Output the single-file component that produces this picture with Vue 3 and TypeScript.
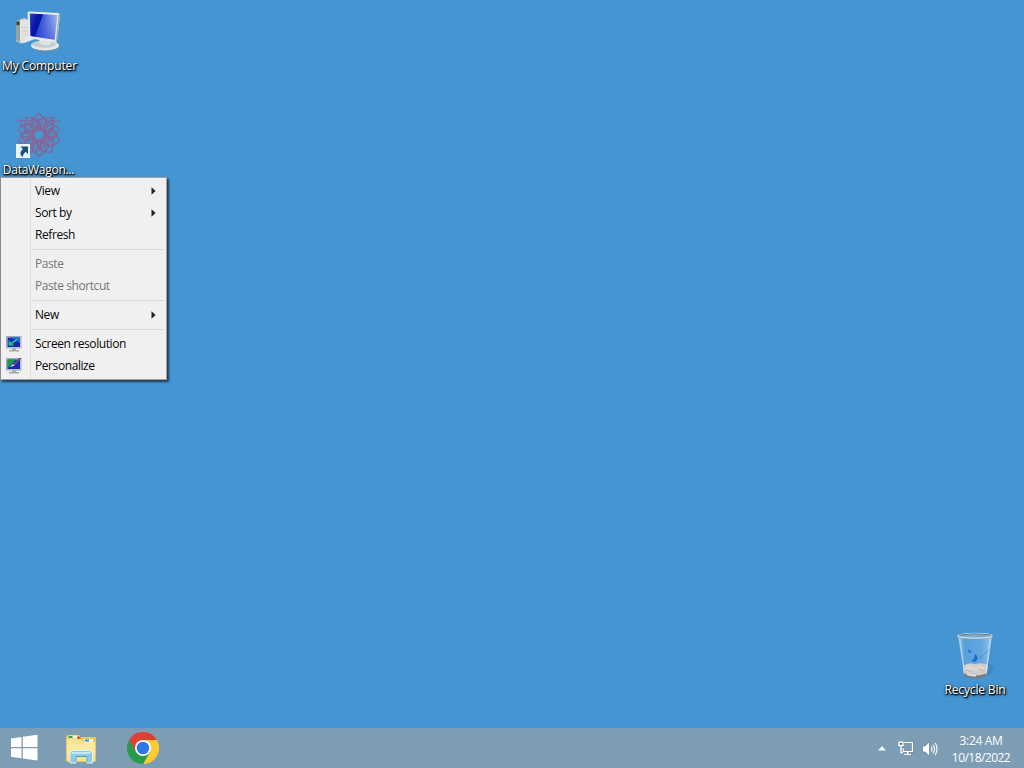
<script setup lang="ts">
interface MenuItem {
  label?: string
  submenu?: boolean
  disabled?: boolean
  icon?: 'resolution' | 'personalize'
}

const menu: MenuItem[] = [
  { label: 'View', submenu: true },
  { label: 'Sort by', submenu: true },
  { label: 'Refresh' },
  {},
  { label: 'Paste', disabled: true },
  { label: 'Paste shortcut', disabled: true },
  {},
  { label: 'New', submenu: true },
  {},
  { label: 'Screen resolution', icon: 'resolution' },
  { label: 'Personalize', icon: 'personalize' },
]

const petals: number[] = Array.from({ length: 10 }, (_, i) => i * 36)
</script>

<template>
  <div class="desktop">
    <div class="shortcut computer">
      <svg width="48" height="48" viewBox="0 0 48 48">
        <defs>
          <linearGradient id="scr" x1="0" y1="0" x2="1" y2="0.35">
            <stop offset="0" stop-color="#2b49d0" />
            <stop offset=".3" stop-color="#0a14a0" />
            <stop offset=".42" stop-color="#0a14a0" />
            <stop offset=".46" stop-color="#3c62dc" />
            <stop offset="1" stop-color="#b4d0fa" />
          </linearGradient>
          <linearGradient id="scrdark" x1="0" y1="0" x2="0" y2="1">
            <stop offset="0" stop-color="#0814a0" stop-opacity="0" />
            <stop offset="1" stop-color="#0618d0" stop-opacity=".55" />
          </linearGradient>
        </defs>
        <path d="M1 13 L9 10 L15 12 L15 31 L5 35 L1 33Z" fill="#c9cdd0" />
        <path d="M5 12 L15 12 L15 31 L5 35Z" fill="#e2e4e3" />
        <path d="M1 13 L5 12 V34 L1 32Z" fill="#999f9c" />
        <rect x="1.400" y="13.500" width="3" height="3.600" fill="#274e22" />
        <path d="M6.500 19.500H13M6.500 23H13M7 27H13" stroke="#ccd0d1" />
        <path d="M5 35.500 L17 29 L20 31 L9 35Z" fill="#e9eceb" />
        <ellipse cx="31" cy="39" rx="15" ry="5.300" fill="#6f8ea5" opacity=".6" />
        <ellipse cx="30" cy="37.500" rx="14" ry="5" fill="#e4e8e8" />
        <ellipse cx="29" cy="36.300" rx="12" ry="3.500" fill="#c5cccf" />
        <path d="M25 29 L36 30 L36 36 Q30 39 24 35Z" fill="#dce1e2" />
        <path d="M12.500 5 Q12.600 3.500 14.200 3.600 L43.500 5 Q45.300 5.100 45.100 7 L42 33 Q41.700 35 40 34.600 L15.600 30.500 Q14 30.200 14 28.400Z" fill="#e6e9e7" />
        <path d="M43.500 5.200 Q45.300 5.300 45.100 7 L42 33 L40.600 34.400Z" fill="#a8aeae" />
        <path d="M14.800 5.600 L42.300 7 L39.600 31.800 L15.500 28Z" fill="url(#scr)" />
        <path d="M14.800 5.600 L42.300 7 L39.600 31.800 L15.500 28Z" fill="url(#scrdark)" />
      </svg>
      <span class="caption cap-computer">My Computer</span>
    </div>

    <div class="shortcut wagon">
      <svg width="48" height="48" viewBox="0 0 48 48">
        <g fill="none" stroke="#b04a78" stroke-width="1.100" opacity=".72">
          <g v-for="a in petals" :key="a" :transform="`rotate(${a} 24 24)`">
            <path d="M21 18 L17 9 L24 2.500 L31 9 L27 18" />
            <path d="M24 19 L14 13 L18 7 L25 11 L21 17 L28 20" />
          </g>
          <circle cx="24" cy="23.500" r="7" />
          <path d="M1.500 10H20M30 10H46M6 7V17M38 5V20" />
        </g>
        <circle cx="24" cy="23.500" r="2.800" fill="#4e93cd" />
        <rect x="1" y="33" width="14" height="14" fill="#e9f2f8" />
        <path d="M5.500 35.500 H13 V43 L10.600 40.800 Q8.300 42.200 7.800 46 Q2.800 42.500 7.900 38Z" fill="#164f80" />
      </svg>
      <span class="caption cap-wagon">DataWagon...</span>
    </div>

    <div class="shortcut recycle">
      <svg width="48" height="48" viewBox="0 0 48 48">
        <defs>
          <linearGradient id="glass" x1="0" y1="0" x2="1" y2="0">
            <stop offset="0" stop-color="#b3d0e7" stop-opacity=".8" />
            <stop offset=".2" stop-color="#5ea4de" stop-opacity=".75" />
            <stop offset=".7" stop-color="#6aacE4" stop-opacity=".8" />
            <stop offset="1" stop-color="#a5d0ee" stop-opacity=".85" />
          </linearGradient>
        </defs>
        <path d="M37 30 L43 36 L40 42 L33 45Z" fill="#1f5a90" opacity=".22" />
        <path d="M7 4 L41 4 L35.500 43.500 Q24 49 13 43.500Z" fill="url(#glass)" />
        <path d="M12 34 Q17 30 24 32 Q31 30 37 33 L35.500 43 Q24 48 13 43Z" fill="#cfcccb" />
        <path d="M14 36 L19 33 L23 36 L29 33 L34 36 L30 39 L22 38 L16 40Z" fill="#ded8d3" />
        <path d="M15 38 L21 40 M27 37 L33 39" stroke="#bcb2aa" />
        <path d="M13 41.500 Q24 45.500 35.700 41.500 L35 44.500 Q24 48.500 13.500 44.500Z" fill="#757c80" />
        <path d="M16 42.500 Q21 44 25 43.800" stroke="#e5e5e3" stroke-width="1.500" fill="none" />
        <path d="M24 22 Q27 24 26.500 27 L24 30 L20 29 L23 27Z M17 17 L21 20 L18 21Z" fill="#1e68d0" />
        <path d="M28 27 L39 17" stroke="#347fb9" opacity=".5" />
        <path d="M8.800 7 L13.500 40" stroke="#cfe0ec" stroke-width="1.200" opacity=".7" />
        <path d="M39.200 7 L35.200 40" stroke="#d5e9f7" stroke-width="1.200" opacity=".7" />
        <ellipse cx="24" cy="3.800" rx="17" ry="2.300" fill="#76a9cf" stroke="#d1d9dc" stroke-width="1.300" />
        <path d="M8 3 Q24 .5 40 3" fill="none" stroke="#637984" />
      </svg>
      <span class="caption cap-recycle">Recycle Bin</span>
    </div>

    <ul class="menu">
      <li
        v-for="(item, i) in menu"
        :key="i"
        :class="item.label ? ['item', { disabled: item.disabled }] : 'separator'"
      >
        <template v-if="item.label">
          <span class="gutter">
            <svg v-if="item.icon" width="16" height="16" viewBox="0 0 16 16">
              <rect x=".5" y=".5" width="14.500" height="11.500" fill="#d9dde4" stroke="#a2a8b2" />
              <rect x="1.500" y="1.500" width="12.500" height="9.500" fill="#1429b5" />
              <path d="M6 12.500H10V14H13V15.500H3V14H6Z" fill="#a3aaa9" />
              <template v-if="item.icon === 'resolution'">
                <path d="M5 1.500H14V7Z" fill="#1565db" />
                <path d="M2.500 4V9.500H8L6.500 7.700L12 3.500L11 2.500L5 6.400Z" fill="#28c080" />
              </template>
              <template v-else>
                <path d="M1.500 1.500H10L5 7L1.500 10.500Z" fill="#1a9a50" />
                <path d="M4 9L7.500 5.500L9 7.500Z" fill="#f3eef4" />
                <path d="M7.500 7L14.500 0" stroke="#78477d" stroke-width="2" />
              </template>
            </svg>
          </span>
          <span class="label">{{ item.label }}</span>
          <svg v-if="item.submenu" class="arrow" width="5" height="8" viewBox="0 0 5 8">
            <path d="M.5 .2L4.600 4L.5 7.800Z" fill="#222" />
          </svg>
        </template>
      </li>
    </ul>

    <footer class="taskbar">
      <div class="apps">
        <svg class="start" width="28" height="28" viewBox="0 0 28 28">
          <path d="M1 4.500L11.500 3V13H1ZM12.800 2.800L27.500 .8V13H12.800ZM1 14.300H11.500V24.300L1 22.800ZM12.800 14.300H27.500V26.500L12.800 24.500Z" fill="#fff" />
        </svg>
        <svg class="explorer" width="32" height="30" viewBox="0 0 32 30">
          <path d="M1 3Q1 1 3 1H14Q15 1 15 3H30Q31 3 31 4V26Q31 28 29 28H3Q1 28 1 26Z" fill="#e8c765" />
          <rect x="4" y="1.500" width="9" height="3" fill="#f7f2d0" />
          <rect x="4" y="2" width="3.500" height="2" fill="#2ba152" />
          <rect x="12" y="2.500" width="3.500" height="3" fill="#d86332" />
          <path d="M2 5H16L19 8H30V27H2Z" fill="#f8e391" />
          <path d="M18 5H28V8H20Z" fill="#f5f7ee" />
          <rect x="20" y="5.500" width="4" height="2" fill="#398fc9" />
          <path d="M2 10H17L20 8H30V20H2Z" fill="#fbeaa1" />
          <path d="M5 29V20Q5 16.500 8.500 16.500H24Q27.500 16.500 27.500 20V29H22V22.500H11V29Z" fill="#8bcbe8" stroke="#dff3fa" />
          <path d="M7 19H25" stroke="#c4e9f6" stroke-width="2" />
          <path d="M11 28V22.500H22V28" fill="none" stroke="#4a9ec1" />
        </svg>
        <svg class="chrome" width="32" height="32" viewBox="0 0 32 32">
          <path d="M2.140 8A16 16 0 0 1 29.860 8H16L9.070 20Z" fill="#de4032" />
          <path d="M29.860 8A16 16 0 0 1 16 32L22.930 20L16 8Z" fill="#fdca32" />
          <path d="M16 32A16 16 0 0 1 2.140 8L9.070 20H22.930Z" fill="#289b4a" />
          <circle cx="16" cy="16" r="8" fill="#fff" />
          <circle cx="16" cy="16" r="6.300" fill="#2f78e8" />
        </svg>
      </div>
      <div class="tray">
        <svg class="up" width="8" height="5" viewBox="0 0 8 5">
          <path d="M4 0L8 4.500H0Z" fill="#f7fbfd" />
        </svg>
        <svg class="net" width="16" height="15" viewBox="0 0 16 15">
          <path d="M5 1.500H15V10.500H4.500V6M9.500 10.500V13.500M6 13.500H13" fill="none" stroke="#3d5364" stroke-width="3" opacity=".55" />
          <path d="M6 1.500H14.500V10.500H5V7M9.700 10.500V13.500M6 13.500H13" fill="none" stroke="#fff" stroke-width="1.500" />
          <path d="M1 1.200H5V4.500H1ZM3 4.500V11.500H5" fill="#586f80" stroke="#fff" stroke-width="1.400" />
        </svg>
        <svg class="sound" width="16" height="16" viewBox="0 0 16 16">
          <path d="M.5 5H3L7.500 .8V15.200L3 11H.5Z" fill="#fff" stroke="#576d7c" stroke-width=".6" />
          <path d="M9.300 5.500Q10.700 8 9.300 10.500M11.300 3.700Q13.700 8 11.300 12.300M13.200 1.800Q16.700 8 13.200 14.200" fill="none" stroke="#f3f8fb" stroke-width="1.200" />
        </svg>
        <div class="clock">
          <span class="time">3:24 AM</span>
          <span class="date">10/18/2022</span>
        </div>
      </div>
    </footer>
  </div>
</template>

<style>
body {
  margin: 0;
  overflow: hidden;
}
</style>

<style scoped>
.desktop {
  position: relative;
  display: flex;
  flex-direction: column;
  justify-content: flex-end;
  width: 1024px;
  height: 768px;
  overflow: hidden;
  background: #4495d1;
  font: 12px/16px "Open Sans", "Noto Sans", sans-serif;
}
svg {
  display: block;
  flex: none;
}
.shortcut {
  position: absolute;
  display: flex;
  flex-direction: column;
  align-items: center;
  width: 78px;
}
.computer { left: 0; top: 8px; }
.wagon { left: 0; top: 111px; }
.recycle { left: 936px; top: 632px; }
.caption {
  margin-top: 2px;
  color: #fff;
  letter-spacing: -0.15px;
  white-space: nowrap;
  text-shadow: 1px 1px 1px #000, 0 1px 2px #000, 1px 1px 3px rgba(0, 0, 0, 0.8);
}
.cap-computer { padding-left: 1px; }
.cap-wagon {
  margin-top: 3px;
  margin-right: 1px;
  letter-spacing: -0.28px;
}
.menu {
  position: absolute;
  left: 0;
  top: 177px;
  box-sizing: border-box;
  width: 167px;
  height: 203px;
  margin: 0;
  padding: 2px;
  border: 1px solid #a0a0a0;
  border-left-color: #8a8a8a;
  list-style: none;
  background: linear-gradient(90deg, transparent 29px, #dedede 29px, #dedede 30px, transparent 30px) #f0f0f0;
  box-shadow: 2px 2px 2px rgba(0, 0, 0, 0.6);
}
.item {
  display: flex;
  align-items: center;
  height: 22px;
  color: #080808;
}
.disabled { color: #777; }
.gutter {
  width: 32px;
  flex: none;
}
.gutter svg { margin-left: 3px; }
.label {
  flex: 1;
  letter-spacing: -0.42px;
  white-space: nowrap;
}
.arrow { margin-right: 8px; }
.separator {
  height: 7px;
  margin-left: 29px;
  background: linear-gradient(#d7d7d7, #d7d7d7) 0 3px / 100% 1px no-repeat;
}
.taskbar {
  display: flex;
  justify-content: space-between;
  height: 40px;
  box-sizing: border-box;
  padding-bottom: 1px;
  border-top: 1px solid #769cb9;
  background: #7d9db5;
}
.apps,
.tray {
  display: flex;
  align-items: center;
}
.start { margin-left: 10px; }
.explorer { margin-left: 27px; margin-top: 2px; }
.chrome { margin-left: 30px; }
.up { margin-top: 1px; }
.net { margin-left: 12px; margin-top: 1px; }
.sound { margin-left: 8px; margin-top: 1px; }
.clock {
  display: flex;
  flex-direction: column;
  align-items: center;
  width: 86px;
  padding-top: 1px;
  line-height: 17px;
  color: #fff;
}
.time { letter-spacing: -0.35px; }
.date { letter-spacing: -0.53px; }
</style>
